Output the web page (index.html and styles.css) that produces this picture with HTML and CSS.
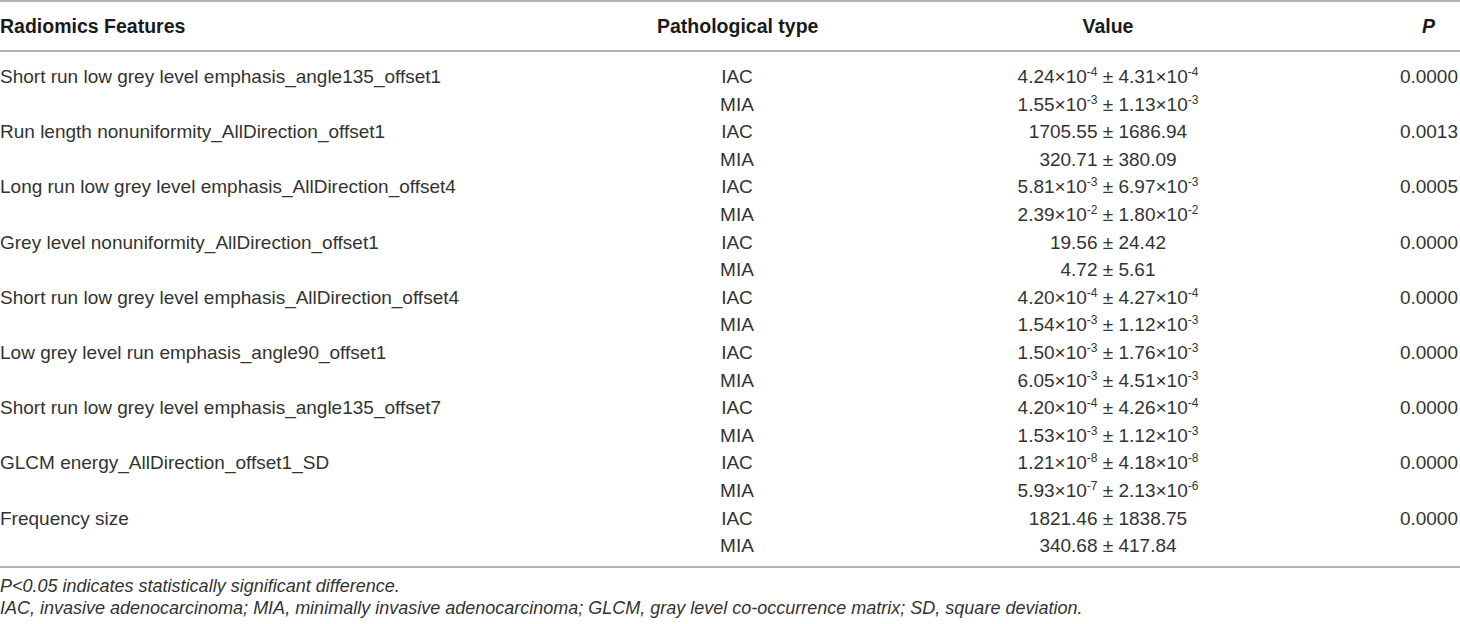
FILE: index.html
```html
<!DOCTYPE html>
<html>
<head>
<meta charset="utf-8">
<link rel="stylesheet" href="styles.css">
</head>
<body>
<div class="table">
  <div class="head row">
    <div class="c-feat">Radiomics Features</div>
    <div class="c-type">Pathological type</div>
    <div class="c-val">Value</div>
    <div class="c-p"><i>P</i></div>
  </div>
  <div class="body">
    <div class="row"><div class="c-feat">Short run low grey level emphasis_angle135_offset1</div><div class="c-type">IAC</div><div class="c-val">4.24×10<sup>-4</sup> ± 4.31×10<sup>-4</sup></div><div class="c-p">0.0000</div></div>
    <div class="row"><div class="c-feat"></div><div class="c-type">MIA</div><div class="c-val">1.55×10<sup>-3</sup> ± 1.13×10<sup>-3</sup></div><div class="c-p"></div></div>

    <div class="row"><div class="c-feat">Run length nonuniformity_AllDirection_offset1</div><div class="c-type">IAC</div><div class="c-val">1705.55 ± 1686.94</div><div class="c-p">0.0013</div></div>
    <div class="row"><div class="c-feat"></div><div class="c-type">MIA</div><div class="c-val">320.71 ± 380.09</div><div class="c-p"></div></div>

    <div class="row"><div class="c-feat">Long run low grey level emphasis_AllDirection_offset4</div><div class="c-type">IAC</div><div class="c-val">5.81×10<sup>-3</sup> ± 6.97×10<sup>-3</sup></div><div class="c-p">0.0005</div></div>
    <div class="row"><div class="c-feat"></div><div class="c-type">MIA</div><div class="c-val">2.39×10<sup>-2</sup> ± 1.80×10<sup>-2</sup></div><div class="c-p"></div></div>

    <div class="row"><div class="c-feat">Grey level nonuniformity_AllDirection_offset1</div><div class="c-type">IAC</div><div class="c-val">19.56 ± 24.42</div><div class="c-p">0.0000</div></div>
    <div class="row"><div class="c-feat"></div><div class="c-type">MIA</div><div class="c-val">4.72 ± 5.61</div><div class="c-p"></div></div>

    <div class="row"><div class="c-feat">Short run low grey level emphasis_AllDirection_offset4</div><div class="c-type">IAC</div><div class="c-val">4.20×10<sup>-4</sup> ± 4.27×10<sup>-4</sup></div><div class="c-p">0.0000</div></div>
    <div class="row"><div class="c-feat"></div><div class="c-type">MIA</div><div class="c-val">1.54×10<sup>-3</sup> ± 1.12×10<sup>-3</sup></div><div class="c-p"></div></div>

    <div class="row"><div class="c-feat">Low grey level run emphasis_angle90_offset1</div><div class="c-type">IAC</div><div class="c-val">1.50×10<sup>-3</sup> ± 1.76×10<sup>-3</sup></div><div class="c-p">0.0000</div></div>
    <div class="row"><div class="c-feat"></div><div class="c-type">MIA</div><div class="c-val">6.05×10<sup>-3</sup> ± 4.51×10<sup>-3</sup></div><div class="c-p"></div></div>

    <div class="row"><div class="c-feat">Short run low grey level emphasis_angle135_offset7</div><div class="c-type">IAC</div><div class="c-val">4.20×10<sup>-4</sup> ± 4.26×10<sup>-4</sup></div><div class="c-p">0.0000</div></div>
    <div class="row"><div class="c-feat"></div><div class="c-type">MIA</div><div class="c-val">1.53×10<sup>-3</sup> ± 1.12×10<sup>-3</sup></div><div class="c-p"></div></div>

    <div class="row"><div class="c-feat">GLCM energy_AllDirection_offset1_SD</div><div class="c-type">IAC</div><div class="c-val">1.21×10<sup>-8</sup> ± 4.18×10<sup>-8</sup></div><div class="c-p">0.0000</div></div>
    <div class="row"><div class="c-feat"></div><div class="c-type">MIA</div><div class="c-val">5.93×10<sup>-7</sup> ± 2.13×10<sup>-6</sup></div><div class="c-p"></div></div>

    <div class="row"><div class="c-feat">Frequency size</div><div class="c-type">IAC</div><div class="c-val">1821.46 ± 1838.75</div><div class="c-p">0.0000</div></div>
    <div class="row"><div class="c-feat"></div><div class="c-type">MIA</div><div class="c-val">340.68 ± 417.84</div><div class="c-p"></div></div>
  </div>
  <div class="notes">
    <p><i>P</i>&lt;0.05 indicates statistically significant difference.</p>
    <p>IAC, invasive adenocarcinoma; MIA, minimally invasive adenocarcinoma; GLCM, gray level co-occurrence matrix; SD, square deviation.</p>
  </div>
</div>
</body>
</html>
```

FILE: styles.css
```css
html, body {
  margin: 0;
  padding: 0;
  background: #ffffff;
}

body {
  font-family: "Liberation Sans", Arial, sans-serif;
  color: #333333;
}

.table {
  width: 1460px;
}

.row {
  display: grid;
  grid-template-columns: 657px 160px 582px 1fr;
  font-size: 19px;
  line-height: 27.6px;
  height: 27.6px;
}

.head {
  border-top: 2px solid #b3b3b3;
  border-bottom: 2px solid #b3b3b3;
  padding: 13px 0 13px;
  height: 22px;
  line-height: 22px;
  font-size: 19.5px;
  font-weight: bold;
  color: #1a1a1a;
}

.head .c-p {
  text-align: center;
}

.body {
  padding: 11px 0 6px;
  border-bottom: 2px solid #b3b3b3;
}

.c-feat {
  white-space: nowrap;
}

.c-type, .c-val {
  text-align: center;
  white-space: nowrap;
}

.c-p {
  text-align: right;
  padding-right: 2px;
}

sup {
  font-size: 12px;
  line-height: 0;
  vertical-align: 7px;
}

.notes {
  padding-top: 7px;
  font-style: italic;
  font-size: 18px;
  line-height: 22px;
  color: #333333;
}

.notes p {
  margin: 0;
}
```
